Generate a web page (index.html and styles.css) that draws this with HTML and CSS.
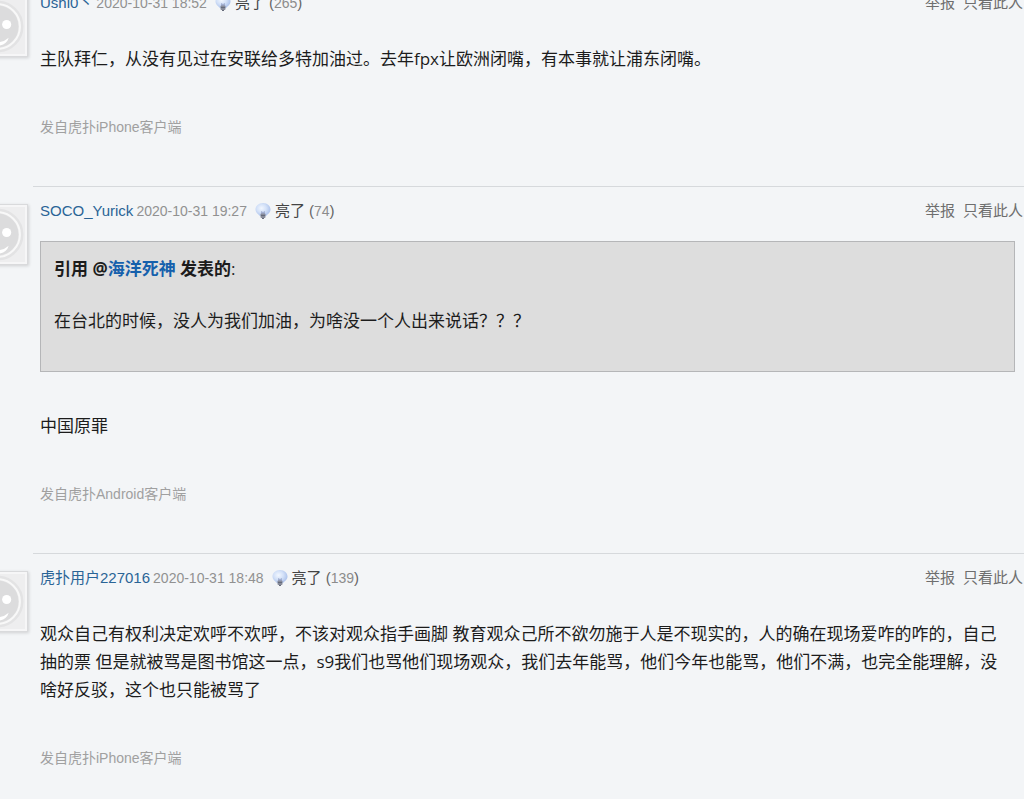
FILE: index.html
```
<!DOCTYPE html>
<html lang="zh-CN">
<head>
    <meta charset="UTF-8">
    <meta name="viewport" content="width=device-width, initial-scale=1.0">
    <title>虎扑社区</title>
    <link rel="stylesheet" href="styles.css">
</head>
<body>
    <!-- 公用图标 -->
    <svg class="sprite" width="0" height="0" aria-hidden="true">
        <defs>
            <radialGradient id="bulbGlass" cx="0.4" cy="0.4" r="0.65">
                <stop offset="0" stop-color="#f2f7ff"/>
                <stop offset="0.5" stop-color="#d3e1f8"/>
                <stop offset="1" stop-color="#a9bfea"/>
            </radialGradient>
        </defs>
        <symbol id="face" viewBox="0 0 54 54">
            <rect width="54" height="54" fill="#eeeeef"/>
            <circle cx="27" cy="27" r="23" fill="#dcdcdd" stroke="#e3e3e4" stroke-width="5"/>
            <circle cx="27" cy="27" r="22" fill="none" stroke="#f8f8f8" stroke-width="2"/>
            <circle cx="18" cy="25" r="4.500" fill="#fff"/>
            <circle cx="36" cy="25" r="4.500" fill="#fff"/>
            <path d="M14 37q14 10 24 1q-2 7-11 8q-9 0-13-9z" fill="#fff"/>
        </symbol>
        <symbol id="bulb" viewBox="0 0 16 16">
            <path d="M8 0C12.500 0 15.500 3 15.500 6.500C15.500 9.500 13 11 11 13H5C3 11 0.500 9.500 0.500 6.500C0.500 3 3.500 0 8 0z" fill="url(#bulbGlass)"/>
            <path d="M6 8l2 1 2-1v3H6z" fill="#a3b0d2"/>
            <rect x="5.500" y="10.500" width="5" height="4.500" rx="1" fill="#878b9a"/>
            <path d="M6 12.500h4M7 15.500h2" stroke="#666b7a"/>
        </symbol>
    </svg>

    <main class="thread">
        <article class="post">
            <a class="avatar" href="#" aria-label="Ushi0丶"><svg><use href="#face"/></svg></a>
            <div class="post-main">
                <div class="post-head">
                    <a class="user" href="#">Ushi0丶</a>
                    <span class="time">2020-10-31 18:52</span>
                    <button class="light" type="button"><svg class="bulb"><use href="#bulb"/></svg>亮了 <span class="count">(<i>265</i>)</span></button>
                    <div class="tools"><a href="#">举报</a><a href="#">只看此人</a></div>
                </div>
                <p class="text">主队拜仁，从没有见过在安联给多特加油过。去年fpx让欧洲闭嘴，有本事就让浦东闭嘴。</p>
                <small class="client">发自虎扑iPhone客户端</small>
            </div>
        </article>

        <article class="post">
            <a class="avatar" href="#" aria-label="SOCO_Yurick"><svg><use href="#face"/></svg></a>
            <div class="post-main">
                <div class="post-head">
                    <a class="user" href="#">SOCO_Yurick</a>
                    <span class="time">2020-10-31 19:27</span>
                    <button class="light" type="button"><svg class="bulb"><use href="#bulb"/></svg>亮了 <span class="count">(<i>74</i>)</span></button>
                    <div class="tools"><a href="#">举报</a><a href="#">只看此人</a></div>
                </div>
                <blockquote class="quote">
                    <p><b>引用 @<a href="#">海洋死神</a> 发表的</b>:</p>
                    <p>在台北的时候，没人为我们加油，为啥没一个人出来说话？？？</p>
                </blockquote>
                <p class="text after-quote">中国原罪</p>
                <small class="client">发自虎扑Android客户端</small>
            </div>
        </article>

        <article class="post">
            <a class="avatar" href="#" aria-label="虎扑用户227016"><svg><use href="#face"/></svg></a>
            <div class="post-main">
                <div class="post-head">
                    <a class="user" href="#">虎扑用户227016</a>
                    <span class="time">2020-10-31 18:48</span>
                    <button class="light" type="button"><svg class="bulb"><use href="#bulb"/></svg>亮了 <span class="count">(<i>139</i>)</span></button>
                    <div class="tools"><a href="#">举报</a><a href="#">只看此人</a></div>
                </div>
                <p class="text">观众自己有权利决定欢呼不欢呼，不该对观众指手画脚 教育观众己所不欲勿施于人是不现实的，人的确在现场爱咋的咋的，自己抽的票 但是就被骂是图书馆这一点，s9我们也骂他们现场观众，我们去年能骂，他们今年也能骂，他们不满，也完全能理解，没啥好反驳，这个也只能被骂了</p>
                <small class="client">发自虎扑iPhone客户端</small>
            </div>
        </article>
    </main>
</body>
</html>
```
FILE: styles.css
```
body { margin: 0; background-color: #f3f5f7; color: #1c1c1c; font-family: "Liberation Sans", "Noto Sans CJK SC", sans-serif; font-size: 15px; line-height: 20px; overflow-x: hidden; }
a { color: #2a6496; text-decoration: none; }
a:hover { text-decoration: underline; }
p { margin: 0; }
.sprite { position: absolute; }

.thread { margin: -22px 0 -20px -33px; }

.post { display: flex; align-items: flex-start; gap: 5px; }

/* 头像 */
.avatar {
    flex: none;
    box-sizing: border-box;
    width: 61px;
    height: 61px;
    margin-top: 18px;
    padding: 2px;
    background-color: #f6f6f7;
    border: 1px solid #d9dadc;
    box-shadow: 1px 1px 3px rgba(0,0,0,0.15);
}

.avatar svg { display: block; width: 100%; height: 100%; }

.post-main {
    flex: 1;
    min-width: 0;
    border-top: 1px solid #d6d9dc;
    padding: 14px 0 49px 7px;
}

.post-head { display: flex; align-items: center; gap: 3px; height: 20px; white-space: nowrap; }
.time { color: #919191; font-size: 14px; }

.light {
    display: flex;
    align-items: center;
    gap: 4px;
    margin-left: 5px;
    padding: 0;
    border: none;
    background: none;
    color: #444;
    font: inherit;
    cursor: pointer;
}

.bulb { width: 16px; height: 16px; }
.count i { color: #8c8c8c; font-style: normal; font-size: 14px; }
.count { color: #666; }

.tools { display: flex; gap: 8px; margin-left: auto; padding-right: 1px; }
.tools a { color: #6e6e6e; }

/* 正文 */
.text { margin-top: 32px; padding-right: 12px; }
.text, .quote { font-family: "Open Sans", "Noto Sans CJK SC", sans-serif; font-size: 17px; line-height: 28px; }
.after-quote { margin-top: 40px; }
.client { display: block; margin-top: 44px; color: #a0a0a0; font-size: 14px; }

.quote {
    margin: 20px 9px 0 0;
    padding: 13px 13px 36px;
    background-color: #dddddd;
    border: 1px solid #b5b6b8;
}

.quote p + p { margin-top: 24px; }
.quote a { color: #1560ac; }
```
